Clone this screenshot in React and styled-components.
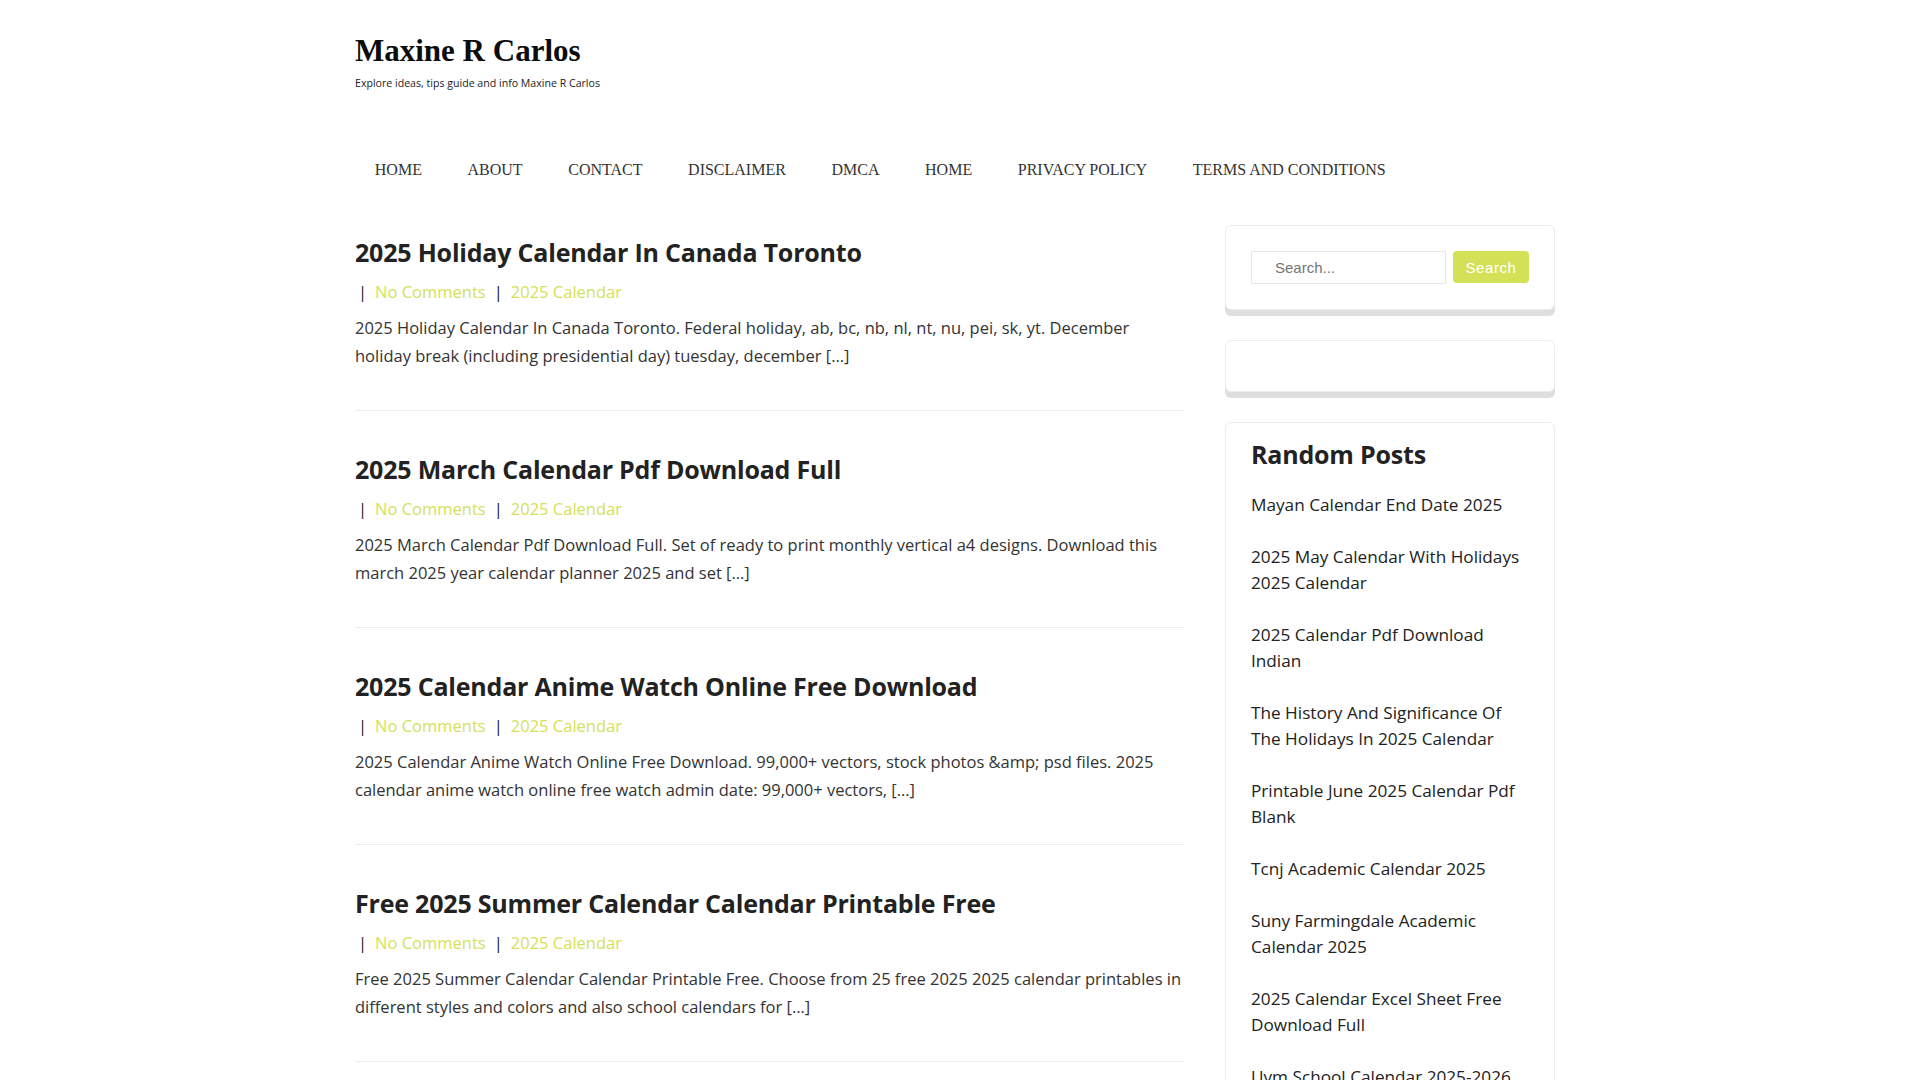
import React from 'react';
import styled, { createGlobalStyle } from 'styled-components';

const GlobalStyle = createGlobalStyle`
  html, body {
    margin: 0;
    padding: 0;
    background: #ffffff;
  }
  body {
    padding-right: 10px;
    font-family: 'Open Sans', 'Noto Sans', sans-serif;
    color: #333333;
  }
  ::-webkit-scrollbar {
    width: 10px;
  }
  ::-webkit-scrollbar-track {
    background: #ffffff;
  }
  ::-webkit-scrollbar-thumb {
    background: #555555;
    border-left: 3px solid #ffffff;
    border-right: 3px solid #ffffff;
  }
`;

const navItems = ['Home', 'About', 'Contact', 'Disclaimer', 'DMCA', 'Home', 'Privacy Policy', 'Terms and Conditions'];

const posts = [
  {
    title: '2025 Holiday Calendar In Canada Toronto',
    excerpt:
      '2025 Holiday Calendar In Canada Toronto. Federal holiday, ab, bc, nb, nl, nt, nu, pei, sk, yt. December holiday break (including presidential day) tuesday, december […]',
  },
  {
    title: '2025 March Calendar Pdf Download Full',
    excerpt:
      '2025 March Calendar Pdf Download Full. Set of ready to print monthly vertical a4 designs. Download this march 2025 year calendar planner 2025 and set […]',
  },
  {
    title: '2025 Calendar Anime Watch Online Free Download',
    excerpt:
      '2025 Calendar Anime Watch Online Free Download. 99,000+ vectors, stock photos &amp; psd files. 2025 calendar anime watch online free watch admin date: 99,000+ vectors, […]',
  },
  {
    title: 'Free 2025 Summer Calendar Calendar Printable Free',
    excerpt:
      'Free 2025 Summer Calendar Calendar Printable Free. Choose from 25 free 2025 2025 calendar printables in different styles and colors and also school calendars for […]',
  },
];

const randomPosts = [
  'Mayan Calendar End Date 2025',
  '2025 May Calendar With Holidays 2025 Calendar',
  '2025 Calendar Pdf Download Indian',
  'The History And Significance Of The Holidays In 2025 Calendar',
  'Printable June 2025 Calendar Pdf Blank',
  'Tcnj Academic Calendar 2025',
  'Suny Farmingdale Academic Calendar 2025',
  '2025 Calendar Excel Sheet Free Download Full',
  'Uvm School Calendar 2025-2026',
];

const App = () => {
  return (
    <>
      <GlobalStyle />
      <Page>
        <SiteHeader>
          <SiteTitle href="#">Maxine R Carlos</SiteTitle>
          <Tagline>Explore ideas, tips guide and info Maxine R Carlos</Tagline>
          <Nav>
            {navItems.map((item, i) => (
              <NavLink key={i} href="#">
                {item}
              </NavLink>
            ))}
          </Nav>
        </SiteHeader>

        <ContentRow>
          <Main>
            {posts.map((post) => (
              <Article key={post.title}>
                <PostTitle href="#">{post.title}</PostTitle>
                <Meta>
                  <Sep>|</Sep>
                  <MetaLink href="#">No Comments</MetaLink>
                  <Sep $mid>|</Sep>
                  <MetaLink href="#">2025 Calendar</MetaLink>
                </Meta>
                <Excerpt>{post.excerpt}</Excerpt>
              </Article>
            ))}
          </Main>

          <Sidebar>
            <Widget>
              <SearchForm onSubmit={(e) => e.preventDefault()}>
                <SearchInput type="search" placeholder="Search..." />
                <SearchButton type="submit">Search</SearchButton>
              </SearchForm>
            </Widget>
            <Widget />
            <Widget $tight>
              <WidgetTitle>Random Posts</WidgetTitle>
              <PostList>
                {randomPosts.map((p) => (
                  <li key={p}>
                    <SideLink href="#">{p}</SideLink>
                  </li>
                ))}
              </PostList>
            </Widget>
          </Sidebar>
        </ContentRow>
      </Page>
    </>
  );
};

export default App;

const Page = styled.div`
  width: 1200px;
  margin: 0 auto;
`;

const SiteHeader = styled.header`
  padding-top: 32px;
`;

const SiteTitle = styled.a`
  display: block;
  font-family: 'Liberation Serif', 'DejaVu Serif', serif;
  font-weight: 700;
  font-size: 31px;
  line-height: 38px;
  color: #0c0c0c;
  text-decoration: none;
`;

const Tagline = styled.p`
  margin: 3px 0 0;
  font-size: 10.6px;
  line-height: 20px;
  color: #222222;
`;

const Nav = styled.nav`
  display: flex;
  margin: 52px 0 0 -3px;
`;

const NavLink = styled.a`
  padding: 0 22.8px;
  font-family: 'Liberation Serif', 'DejaVu Serif', serif;
  font-size: 16px;
  line-height: 50px;
  text-transform: uppercase;
  color: #333333;
  text-decoration: none;
`;

const ContentRow = styled.div`
  display: grid;
  grid-template-columns: 830px 330px;
  gap: 40px;
  margin-top: 30px;
  align-items: start;
`;

const Main = styled.main`
  display: flex;
  flex-direction: column;
`;

const Article = styled.article`
  padding: 10px 0 40px;
  margin-bottom: 31px;
  border-bottom: 1px solid #ececec;
`;

const PostTitle = styled.a`
  display: block;
  font-size: 25px;
  font-weight: 700;
  line-height: 34px;
  letter-spacing: -0.2px;
  color: #222222;
  text-decoration: none;
`;

const Meta = styled.div`
  margin-top: 9px;
  font-size: 16.5px;
  line-height: 28px;
  color: #222222;
`;

const Sep = styled.span`
  padding: ${(p) => (p.$mid ? '0 8px 0 8px' : '0 8px 0 3px')};
`;

const MetaLink = styled.a`
  color: #d4e157;
  text-decoration: none;
`;

const Excerpt = styled.p`
  margin: 8px 0 0;
  font-size: 16.5px;
  line-height: 28px;
  color: #333333;
`;

const Sidebar = styled.aside`
  display: flex;
  flex-direction: column;
  gap: 30px;
`;

const Widget = styled.section`
  padding: ${(p) => (p.$tight ? '16px 25px 25px' : '25px')};
  border: 1px solid #ececec;
  border-radius: 6px;
  box-shadow: 0 6px 0 #dedede;
  background: #ffffff;
`;

const SearchForm = styled.form`
  display: flex;
  gap: 7px;
  align-items: flex-start;
`;

const SearchInput = styled.input`
  width: 195px;
  height: 33px;
  box-sizing: border-box;
  padding: 0 8px 0 23px;
  border: 1px solid #e6e6e6;
  font-family: 'Liberation Sans', Arial, sans-serif;
  font-size: 15px;
  color: #555555;
  outline: none;
  &::placeholder {
    color: #757575;
  }
`;

const SearchButton = styled.button`
  width: 76px;
  height: 32px;
  border: none;
  border-radius: 4px;
  background: #d4e157;
  color: #ffffff;
  font-family: 'Liberation Sans', Arial, sans-serif;
  font-size: 15px;
  letter-spacing: 0.6px;
  cursor: pointer;
`;

const WidgetTitle = styled.h2`
  margin: 0 0 23px;
  font-size: 25px;
  font-weight: 700;
  line-height: 30px;
  letter-spacing: -0.2px;
  color: #222222;
`;

const PostList = styled.ul`
  margin: 0;
  padding: 0;
  list-style: none;
  display: flex;
  flex-direction: column;
  gap: 26px;
`;

const SideLink = styled.a`
  font-size: 17.2px;
  line-height: 26px;
  color: #222222;
  text-decoration: none;
`;
